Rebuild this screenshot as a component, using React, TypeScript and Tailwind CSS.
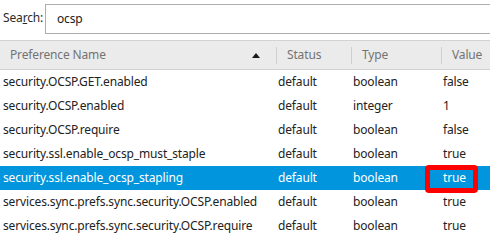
const rows = [
  { name: "security.OCSP.GET.enabled", status: "default", type: "boolean", value: "false" },
  { name: "security.OCSP.enabled", status: "default", type: "integer", value: "1" },
  { name: "security.OCSP.require", status: "default", type: "boolean", value: "false" },
  { name: "security.ssl.enable_ocsp_must_staple", status: "default", type: "boolean", value: "true" },
  { name: "security.ssl.enable_ocsp_stapling", status: "default", type: "boolean", value: "true", selected: true },
  { name: "services.sync.prefs.sync.security.OCSP.enabled", status: "default", type: "boolean", value: "true" },
  { name: "services.sync.prefs.sync.security.OCSP.require", status: "default", type: "boolean", value: "true" },
];

function Sep() {
  return <div className="h-[17px] w-px bg-[#cfcfcf]" />;
}

export default function App() {
  return (
    <div className="relative h-[250px] w-[490px] overflow-hidden bg-white font-['Noto_Sans',sans-serif] text-[12px] tracking-[-0.15px]">
      {/* search bar */}
      <div className="flex h-[40px] items-start pt-[4px]">
        <label className="mt-[5px] w-[45px] pl-[3px] text-[#2b2b2b]">
          Sea<span className="underline">r</span>ch:
        </label>
        <div className="-mr-[20px] flex h-[30px] flex-1 items-center border border-[#adadad] pl-[11px] text-[#1a1a1a]">
          ocsp
        </div>
      </div>

      {/* column headers */}
      <div className="flex h-[30px] items-center border-y border-[#d2d2d2] bg-[#ebebeb] text-[#737373]">
        <div className="flex w-[276px] items-center pl-[10px]">
          <span className="flex-1">Preference Name</span>
          <svg width="8" height="5" viewBox="0 0 8 5" className="mr-[16px]">
            <path d="M0 5 L4 0 L8 5 Z" fill="#1a1a1a" />
          </svg>
        </div>
        <Sep />
        <div className="w-[74px] pl-[10px]">Status</div>
        <Sep />
        <div className="w-[89px] pl-[10px]">Type</div>
        <Sep />
        <div className="flex-1 pl-[10px]">Value</div>
      </div>

      {/* rows */}
      {rows.map((r) => (
        <div
          key={r.name}
          className={`flex h-[24px] items-center whitespace-nowrap ${
            r.selected ? "bg-[#0095dd] text-white" : "text-[#222222]"
          }`}
        >
          <div className="w-[276px] overflow-hidden pl-[3px]">{r.name}</div>
          <div className="w-[75px] pl-[2px]">{r.status}</div>
          <div className="w-[90px] pl-[2px]">{r.type}</div>
          <div className="flex-1 pl-[2px]">{r.value}</div>
        </div>
      ))}

      {/* annotation around the selected value */}
      <div className="absolute left-[425px] top-[165px] h-[28px] w-[53px] rounded-[4px] border-[5px] border-[#ff0000]" />
    </div>
  );
}
